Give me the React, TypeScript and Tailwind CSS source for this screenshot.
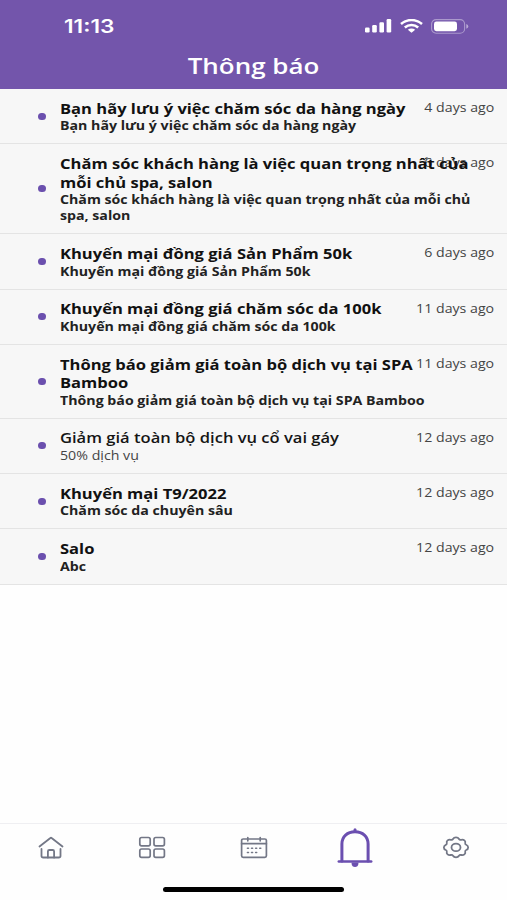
import { useState } from "react";
import type { ReactNode } from "react";

type Notification = {
  id: number;
  title: string;
  body: string;
  time: string;
  light?: boolean;
};

const NOTIFICATIONS: Notification[] = [
  { id: 1, title: "Bạn hãy lưu ý việc chăm sóc da hàng ngày", body: "Bạn hãy lưu ý việc chăm sóc da hàng ngày", time: "4 days ago" },
  { id: 2, title: "Chăm sóc khách hàng là việc quan trọng nhất của mỗi chủ spa, salon", body: "Chăm sóc khách hàng là việc quan trọng nhất của mỗi chủ spa, salon", time: "6 days ago" },
  { id: 3, title: "Khuyến mại đồng giá Sản Phẩm 50k", body: "Khuyến mại đồng giá Sản Phẩm 50k", time: "6 days ago" },
  { id: 4, title: "Khuyến mại đồng giá chăm sóc da 100k", body: "Khuyến mại đồng giá chăm sóc da 100k", time: "11 days ago" },
  { id: 5, title: "Thông báo giảm giá toàn bộ dịch vụ tại SPA Bamboo", body: "Thông báo giảm giá toàn bộ dịch vụ tại SPA Bamboo", time: "11 days ago" },
  { id: 6, title: "Giảm giá toàn bộ dịch vụ cổ vai gáy", body: "50% dịch vụ", time: "12 days ago", light: true },
  { id: 7, title: "Khuyến mại T9/2022", body: "Chăm sóc da chuyên sâu", time: "12 days ago" },
  { id: 8, title: "Salo", body: "Abc", time: "12 days ago" },
];

function StatusBar() {
  return (
    <div className="flex h-[52px] items-center justify-between pl-16 pr-[38px]">
      <span className="mt-[2px] origin-left scale-x-[1.26] font-['Inter'] text-[18px] font-semibold leading-none">11:13</span>
      <div className="flex items-center">
        <svg width="27" height="14" viewBox="0 0 27 14" fill="currentColor">
          <rect x="0" y="8.5" width="4.6" height="5" rx="1.2" />
          <rect x="7.2" y="6" width="4.6" height="7.5" rx="1.2" />
          <rect x="14.4" y="3.3" width="4.6" height="10.2" rx="1.2" />
          <rect x="21.6" y="0" width="4.6" height="13.5" rx="1.2" />
        </svg>
        <svg className="ml-[8px]" width="23" height="14" viewBox="0 0 23 14" fill="none" stroke="currentColor" strokeWidth="2.5">
          <path d="M1 5C7 -.3 16 -.3 22 5" />
          <path d="M4.8 8.5C8.7 5 14.3 5 18.2 8.5" />
          <path d="M7.8 10.7C10 9 13 9 15.2 10.7L11.5 13.7Z" fill="currentColor" stroke="none" />
        </svg>
        <svg className="ml-[8px]" width="38" height="15" viewBox="0 0 38 15" fill="none">
          <rect x=".6" y=".6" width="33" height="13.6" rx="4.5" stroke="white" strokeOpacity=".4" strokeWidth="1.1" />
          <rect x="3" y="2.6" width="23" height="9.6" rx="2.4" fill="white" />
          <path d="M35.3 5Q37.3 6 37.3 7.4T35.3 9.8Z" fill="white" fillOpacity=".5" />
        </svg>
      </div>
    </div>
  );
}

function NotificationItem({ item, onRead }: { item: Notification; onRead: () => void }) {
  return (
    <li onClick={onRead} className="relative flex items-center border-b border-[#e4e4e4] pb-[8.8px] pt-[10.8px] pl-[38px]">
      <span className="absolute right-[12.5px] top-[10px] origin-right scale-x-[1.18] text-[12px] leading-[17px] text-[#444]">{item.time}</span>
      <span className="mt-[-2px] h-[7px] w-2 shrink-0 rounded-full bg-[#6b50ae]" />
      <div className="relative ml-[14px] w-[355px] origin-left scale-x-[1.182]">
        <p className={item.light ? "text-[14px] font-semibold leading-[18.5px] text-[#151515]" : "text-[14px] font-bold leading-[18.5px] text-[#111]"}>{item.title}</p>
        <p className={item.light ? "text-[12px] leading-[16.2px] text-[#444]" : "text-[12px] font-bold leading-[16.2px] text-[#222]"}>{item.body}</p>
      </div>
    </li>
  );
}

function HomeIcon() {
  return (
    <svg width="26" height="24" viewBox="0 0 26 24" fill="none" stroke="currentColor" strokeWidth="1.8" strokeLinecap="round" strokeLinejoin="round">
      <path d="M1.5 10.5L12.4 2Q13 1.5 13.6 2L24.5 10.5" />
      <path d="M3.5 13V20Q3.5 21.5 5.3 21.5H20.7Q22.5 21.5 22.5 20V13" />
      <path d="M9.9 21.5V15.5Q9.9 14 11.3 14H14.7Q16.1 14 16.1 15.5V21.5" />
    </svg>
  );
}

function GridIcon() {
  return (
    <svg width="28" height="24" viewBox="0 0 28 24" fill="none" stroke="currentColor" strokeWidth="1.7">
      <rect x="1.8" y="1.5" width="10.4" height="8.4" rx="1.8" />
      <rect x="16" y="1.5" width="10.4" height="8.4" rx="1.8" />
      <rect x="1.8" y="13" width="10.4" height="8.4" rx="1.8" />
      <rect x="16" y="13" width="10.4" height="8.4" rx="1.8" />
    </svg>
  );
}

function CalendarIcon() {
  return (
    <svg width="28" height="24" viewBox="0 0 28 24" fill="none" stroke="currentColor" strokeWidth="1.7" strokeLinecap="round">
      <rect x="1.6" y="3" width="24.8" height="18.3" rx="1.6" />
      <path d="M1.6 7.7H26.4M7.8 1.5V4.8M20.2 1.5V4.8" />
      <path d="M7.4 12.3H8.5M11.5 12.3H12.6M15.6 12.3H16.7M19.7 12.3H20.8M7.4 16.5H8.5M11.5 16.5H12.6M15.6 16.5H16.7" strokeWidth="1.5" />
    </svg>
  );
}

function BellIcon() {
  return (
    <svg width="36" height="40" viewBox="0 0 36 40" fill="none" stroke="currentColor" strokeWidth="3" strokeLinecap="round">
      <path d="M4.9 33V16C4.9 8.5 10.3 3.8 18 3.8S31.1 8.5 31.1 16V33" />
      <path d="M1.8 33.6H34.2" strokeWidth="2.5" />
      <path d="M18 1.8V3.5" />
      <path d="M14.6 34.5H21.4V36Q21 39 18 39T14.6 36Z" fill="currentColor" stroke="none" />
    </svg>
  );
}

function GearIcon() {
  return (
    <svg width="28" height="24" viewBox="0 0 28 24" fill="none" stroke="currentColor" strokeWidth="1.8" strokeLinejoin="round">
      <path d="M11 3C12.2 .9 15.8 .9 17 3C17.4 3.8 18.2 4 19.2 3.8C21.9 3.3 23.8 4.8 23.2 7C23 7.8 23.3 8.4 24.2 8.8C26.8 9.9 26.8 12.9 24.2 14C23.3 14.4 23 15 23.2 15.8C23.8 18 21.9 19.5 19.2 19C18.2 18.8 17.4 19 17 19.8C15.8 21.9 12.2 21.9 11 19.8C10.6 19 9.8 18.8 8.8 19C6.1 19.5 4.2 18 4.8 15.8C5 15 4.7 14.4 3.8 14C1.2 12.9 1.2 9.9 3.8 8.8C4.7 8.4 5 7.8 4.8 7C4.2 4.8 6.1 3.3 8.8 3.8C9.8 4 10.6 3.8 11 3Z" />
      <ellipse cx="14" cy="11.4" rx="4.5" ry="3.7" />
    </svg>
  );
}

const TABS: { name: string; icon: ReactNode }[] = [
  { name: "home", icon: <HomeIcon /> },
  { name: "services", icon: <GridIcon /> },
  { name: "calendar", icon: <CalendarIcon /> },
  { name: "notifications", icon: <BellIcon /> },
  { name: "settings", icon: <GearIcon /> },
];

function App() {
  const [tab, setTab] = useState("notifications");
  const [, setLastRead] = useState<number | null>(null);

  return (
    <div className="flex h-[900px] w-full flex-col overflow-hidden bg-[#fefefe] font-['Open_Sans',sans-serif]">
      <header className="h-[89px] shrink-0 bg-[#7355ab] text-white">
        <StatusBar />
        <h1 className="origin-center scale-x-[1.235] text-center text-[21px] font-semibold leading-[28px]">Thông báo</h1>
      </header>

      <ul className="bg-[#f7f7f7]">
        {NOTIFICATIONS.map((item) => (
          <NotificationItem key={item.id} item={item} onRead={() => setLastRead(item.id)} />
        ))}
      </ul>

      <nav className="mt-auto h-[77px] border-t border-[#efeff2]">
        <div className="flex h-[47px] items-center">
          {TABS.map(({ name, icon }) => (
            <button key={name} onClick={() => setTab(name)} className={tab === name ? "flex flex-1 justify-center text-[#6b4fb0]" : "flex flex-1 justify-center text-[#737786]"}>
              {icon}
            </button>
          ))}
        </div>
        <div className="mx-auto mt-[16px] h-[5px] w-[181px] rounded-full bg-black" />
      </nav>
    </div>
  );
}

export default App;
